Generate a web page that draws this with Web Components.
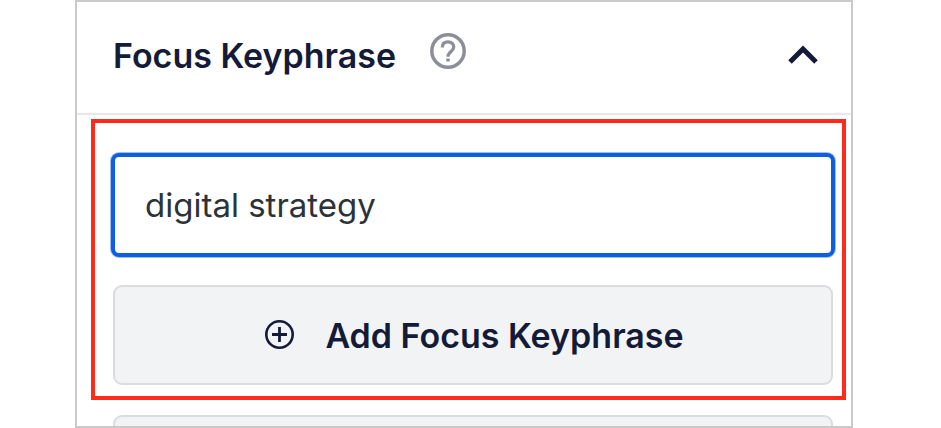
<!DOCTYPE html>
<html lang="en">
<head>
<meta charset="utf-8">
<title>Focus Keyphrase</title>
<style>
body { margin: 0; background: #fff; font-family: Inter, "Liberation Sans", sans-serif; color: #141b38; }
</style>
</head>
<body>
<side-panel>
  <panel-header slot="header">Focus Keyphrase</panel-header>
  <highlight-frame>
    <keyphrase-field value="digital strategy"></keyphrase-field>
    <action-button icon>Add Focus Keyphrase</action-button>
  </highlight-frame>
  <action-button class="next"></action-button>
</side-panel>
<script>
const define = (name, html, setup) => {
  customElements.define(name, class extends HTMLElement {
    constructor() {
      super();
      this.attachShadow({ mode: "open" }).innerHTML = html;
    }
    connectedCallback() { if (setup) setup(this, this.shadowRoot); }
  });
};

define("side-panel", `
<style>
:host { display: flex; flex-direction: column; box-sizing: border-box; height: 100vh; margin: 0 88px 0 75px; border: 2px solid #cacaca; overflow: hidden; }
.body { padding: 4px 5px 0 14px; }
::slotted(.next) { margin: 15px 13px 0 22px; }
</style>
<slot name="header"></slot>
<div class="body"><slot></slot></div>`);

define("panel-header", `
<style>
:host { display: flex; align-items: center; justify-content: space-between; box-sizing: border-box; flex: none; height: 113px; padding: 0 32px 4px 36px; border-bottom: 2px solid #e8e8e8; }
.title { display: flex; align-items: center; gap: 33px; }
h2 { margin: 0; font-size: 34px; line-height: 44px; font-weight: 600; }
button { display: block; padding: 0; border: 0; background: none; color: inherit; }
.help { color: #8c8f9a; padding-bottom: 10px; }
.toggle { padding-bottom: 2px; }
svg { display: block; }
</style>
<div class="title">
  <h2><slot></slot></h2>
  <button class="help" aria-label="Help"><svg width="38" height="38" viewBox="0 0 38 38" fill="none" stroke="currentColor"><circle cx="19" cy="19" r="16.2" stroke-width="3.5"/><path d="M13.3 15.6C13.3 11.9 15.6 9.9 19 9.9s5.7 2 5.7 5.2c0 4.4-5.7 4.4-5.7 9.6" stroke-width="3.3"/><path d="M17.2 26.5h3.6v3h-3.6z" fill="currentColor" stroke="none"/></svg></button>
</div>
<button class="toggle" aria-label="Collapse"><svg width="32" height="20" viewBox="0 0 32 20" fill="none" stroke="currentColor" stroke-width="5"><path d="M3 17 16 4l13 13"/></svg></button>`);

define("highlight-frame", `
<style>
:host { display: flex; flex-direction: column; gap: 30px; padding: 32px 9px 11px 18px; border: 4px solid #ff2a1c; }
</style>
<slot></slot>`);

define("keyphrase-field", `
<style>
:host { display: block; }
input { display: block; box-sizing: border-box; width: 100%; height: 100px; padding: 0 30px; border: 2px solid #0d5fdf; border-radius: 6px; outline: none; box-shadow: 0 0 0 2px #0d5fdf, 0 0 0 3px #0d5fdf66; background: #fff; color: #2c3338; font: 400 33px/44px Inter, "Liberation Sans", sans-serif; }
</style>
<input type="text" aria-label="Focus Keyphrase">`,
(host, root) => { root.querySelector("input").value = host.getAttribute("value"); });

define("action-button", `
<style>
:host { display: block; }
button { display: flex; align-items: center; justify-content: center; gap: 30px; box-sizing: border-box; width: 100%; height: 100px; padding: 2px 0 0 2px; border: 2px solid #dadce0; border-radius: 9px; background: #f2f3f5; color: #141b38; font: 600 34px/44px Inter, "Liberation Sans", sans-serif; }
svg { display: none; flex: none; padding-bottom: 4px; }
:host([icon]) svg { display: block; }
</style>
<button type="button"><svg width="31" height="31" viewBox="0 0 31 31" fill="none" stroke="currentColor"><circle cx="15.5" cy="15.5" r="13.2" stroke-width="2.6"/><path d="M15.5 8v15M8 15.5h15" stroke-width="2.8"/></svg><slot></slot></button>`);
</script>
</body>
</html>
